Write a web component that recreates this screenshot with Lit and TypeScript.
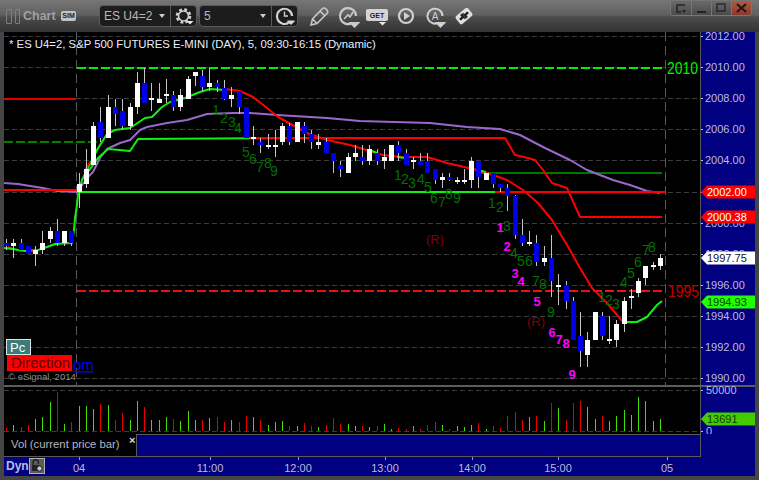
import { LitElement, html, svg, css } from "lit";
import { customElement } from "lit/decorators.js";

type Candle = [number, number, number, number, number]; // up, high, bodyTop, bodyBottom, low
const C: Candle[] = [
[0,239,243,246,250],[1,239,243,246,258],[0,239,243,250,250],[0,246,246,254,254],[1,246,250,254,266],[1,231,243,250,254],[1,227,231,239,243],[0,219,231,243,246],[1,231,231,243,246],[0,231,231,243,246],
[1,173,184,192,208],[1,149,169,184,188],[1,122,126,165,165],[0,107,122,138,142],[1,95,107,138,138],[0,99,107,114,126],[0,99,111,126,130],[1,103,107,126,130],[1,72,83,107,114],[0,68,83,103,103],
[1,83,98,100,111],[1,83,99,103,103],[1,79,94,96,103],[0,91,95,107,111],[1,89,95,107,111],[1,76,79,99,99],[1,72,72,76,86],[0,70,76,87,91],[1,68,83,87,91],[0,80,83,87,92],
[0,80,88,99,100],[1,87,95,99,107],[0,91,91,107,114],[0,107,107,138,138],[1,126,137,139,145],[0,138,142,145,153],[1,134,145,147,149],[1,130,145,147,157],[1,123,126,142,145],[0,123,126,142,145],
[1,122,122,142,142],[0,122,126,134,143],[0,130,134,142,149],[1,134,142,145,149],[0,138,142,153,153],[0,153,153,161,173],[0,161,165,169,177],[1,153,157,173,173],[1,145,153,157,161],[0,145,157,161,165],
[1,145,149,161,165],[0,149,153,161,165],[1,149,157,161,169],[1,145,145,161,161],[0,141,145,153,161],[0,149,153,165,165],[1,157,160,162,169],[0,153,161,165,165],[0,153,161,173,173],[0,169,169,180,184],
[1,173,177,180,188],[0,173,177,180,181],[1,177,180,182,184],[1,169,180,182,184],[1,157,161,180,188],[0,161,161,177,188],[1,173,173,180,180],[0,173,173,184,188],[0,184,184,188,192],[0,184,188,196,211],
[0,195,196,235,239],[0,219,235,243,246],[1,231,242,244,246],[0,235,243,262,266],[1,246,258,262,266],[0,235,258,281,297],[1,274,285,287,305],[0,281,285,301,309],[0,297,301,340,340],[0,312,336,351,367],
[1,332,340,355,367],[1,312,312,340,340],[0,312,316,336,340],[1,316,339,341,344],[1,320,324,340,347],[1,297,301,324,332],[1,289,296,298,309],[1,278,281,293,297],[1,266,266,278,285],[1,262,265,267,270],[1,254,258,266,270],
];
const VOL = [3,6,4,6,12,14,29,39,7,9,25,25,22,27,26,11,18,11,30,24,11,11,14,12,10,20,11,11,13,14,9,11,9,15,
14,11,6,9,10,5,5,8,5,4,6,13,7,7,5,5,4,5,7,2,3,2,5,2,6,9,6,2,5,4,6,8,2,
5,3,15,19,11,14,15,10,28,23,11,28,30,24,12,15,10,15,21,16,34,30,10,12];
const cx = (i: number) => Math.round(6 + i * 7.267);
const GRID = [36,67,98,129,160,192,223,254,285,316,347,378];
const pts = (a: number[][]) => a.map((p) => p.join(",")).join(" ");

const MA_GREEN = [[4,248],[13,249],[18,250],[25,251],[38,250],[47,247],[55,244],[72,243],[74,230],[75,218],[77,205],[78,195],[82,180],[88,168],[97,150],[107,134],[115,130],[130,128],[145,118],[152,117],[162,107],[170,102],[185,98],[200,92],[210,89],[225,90]];
const MA_RED = [[225,89],[240,91],[253,97],[267,108],[278,117],[307,133],[327,140],[350,145],[383,155],[403,157],[427,157],[447,163],[477,170],[493,175],[507,180],[523,190],[538,203],[552,220],[567,245],[580,268],[592,288],[607,303],[623,322]];
const MA_GREEN2 = [[623,322],[637,322],[647,317],[657,305],[662,301]];
const PURPLE = [[4,183],[18,184],[30,186],[43,188],[57,191],[77,192],[88,177],[93,172],[100,158],[107,149],[120,143],[130,140],[140,130],[147,127],[167,123],[187,120],[207,114],[233,113],[250,113],[277,115],[327,118],[360,121],[430,123],[467,127],[500,129],[520,135],[545,148],[570,160],[587,170],[613,180],[630,185],[647,191],[660,193]];
const STEP_GREEN = [[88,172],[98,158],[108,149],[130,151],[138,139],[320,138]];
const STEP_RED = [[250,138],[505,138],[515,155],[528,158],[535,160],[543,170],[552,183],[567,188],[580,217],[662,217]];

const GREENS: [string, number, number][] = [["1",216,110],["2",224,118],["3",232,122],["4",238,128],["5",246,152],["6",253,159],["7",260,167],["8",268,163],["9",274,171],
["1",398,175],["2",405,179],["3",412,183],["4",421,179],["5",428,187],["6",434,198],["7",442,202],["8",449,194],["9",457,198],
["1",492,203],["2",500,207],["3",507,226],["4",514,253],["5",521,261],["6",529,261],["7",536,281],["8",543,284],["9",551,312],
["1",602,297],["2",609,300],["3",616,304],["4",624,282],["5",631,273],["6",638,262],["7",646,250],["8",652,247]];
const MAGENTA: [string, number, number][] = [["1",500,227],["2",507,246],["3",515,273],["4",521,281],["5",537,301],["6",552,332],["7",559,339],["8",566,343],["9",572,374]];

const PRICES: [string, number][] = [["2012.00",36],["2010.00",67],["2008.00",98],["2006.00",129],["2004.00",160],["2002.00",192],["2000.00",223],["1998.00",254],["1996.00",285],["1994.00",316],["1992.00",347],["1990.00",378]];
const TAGS: [string, number, string, string][] = [["2002.00",192,"#ff0000","#ffffff"],["2000.38",217,"#ff0000","#ffffff"],["1997.75",258,"#ffffff","#101030"],["1994.93",302,"#22ff00","#064006"]];

const tag = (x: number, y: number, t: string, bg: string, fg: string) => svg`
  <polygon points="${x},${y} ${x + 6},${y - 6.5} 755,${y - 6.5} 755,${y + 6.5} ${x + 6},${y + 6.5}" fill=${bg}></polygon>
  <text class="tagt" x=${x + 6} y=${y + 4} fill=${fg}>${t}</text>`;

const caret = (x: number, y: number) => svg`<polygon points="${x},${y} ${x + 7},${y} ${x + 3.5},${y + 3.5}" fill="#e8e8e8"></polygon>`;

@customElement("app-root")
export class AppRoot extends LitElement {
  static styles = css`
    :host { display: block; width: 759px; height: 480px; overflow: hidden; font-family: "Liberation Sans", Arial, sans-serif; }
    .frame { width: 759px; height: 480px; box-sizing: border-box; padding-bottom: 4px; background: #454545; display: flex; flex-direction: column; }
    .toolbar { height: 32px; flex: none; display: flex; align-items: center; padding: 0 7px 0 6px; background: linear-gradient(#767676 0, #606060 15px, #4c4c4c 17px, #333 32px); }
    .bars { width: 14px; height: 15px; flex: none; display: flex; gap: 3px; }
    .bars i { flex: 1; border: 1px solid #808080; border-radius: 1px; }
    .title { width: 32px; margin-left: 3px; color: #a0a0a0; font-size: 12.5px; font-weight: 700; flex: none; }
    .sim { margin-left: 6px; width: 15px; height: 10px; background: #c4c4c4; border-radius: 2px; color: #222; font-size: 7px; font-weight: 700; text-align: center; line-height: 10px; flex: none; }
    .combo { box-sizing: border-box; width: 99px; height: 22px; background: #1c1c1c; border: 1px solid #5a5a5a; border-radius: 4px; display: flex; align-items: center; flex: none; color: #b8b8b8; font-size: 12px; }
    .combo.first { margin-left: 23px; width: 98px; }
    .combo.second { margin-left: 2px; margin-right: 4px; }
    .combo .val { flex: 1; padding-left: 4px; }
    .combo .arr { width: 0; height: 0; border: 3px solid transparent; border-top: 4px solid #ccc; margin: 3px 5px 0 0; }
    .combo svg { border-left: 1px solid #5a5a5a; flex: none; }
    .tool { flex: none; margin-left: 5px; display: block; }
    .win { margin-left: auto; align-self: flex-start; margin-top: 1px; display: flex; height: 14px; border: 1px solid #777; border-top: 0; border-radius: 0 0 4px 4px; overflow: hidden; }
    .win span { width: 20px; box-sizing: border-box; border-left: 1px solid #777; background: linear-gradient(#6a6a6a, #4a4a4a); display: flex; align-items: center; justify-content: center; }
    .win span:first-child { border-left: 0; }
    .win .close { background: linear-gradient(#b25a44, #8a3a2a); }
    .row { display: flex; margin-left: 4px; flex: none; width: 751px; }
    .plot { display: block; background: #000; flex: none; }
    .vline { width: 1px; background: #5a5a5a; flex: none; }
    .axisbox { display: block; width: 54px; background: #000080; flex: none; overflow: visible; }
    .sep { height: 2px; background: #5c5c5c; margin-left: 4px; width: 751px; flex: none; }
    .status { height: 23px; }
    .status-main { width: 696px; box-sizing: border-box; display: flex; border-bottom: 1px solid #5a5a5a; flex: none; }
    .legend { width: 132px; flex: none; background: #000; color: #b4b4c4; font-size: 11.3px; position: relative; padding: 4px 0 0 7px; box-sizing: border-box; }
    .legend b { position: absolute; left: 125px; top: 0; color: #ddd; font-size: 11px; line-height: 13px; }
    .strip { flex: 1; background: #000080; border-top: 1px solid #5a5a5a; border-left: 1px solid #5a5a5a; }
    .timerow { height: 19px; background: #000080; }
    .dyn { width: 25px; flex: none; color: #b8bce0; font-size: 12px; font-weight: 700; padding-left: 2px; box-sizing: border-box; line-height: 18px; }
    .lock { flex: none; display: block; margin-top: 1px; }
    text { font-family: "Liberation Sans", Arial, sans-serif; }
    .axis { font-size: 11px; fill: #bcbcdc; }
    .tagt { font-size: 11px; }
    .hd { font-size: 11.35px; fill: #e8f0ff; }
    .num { font-size: 14px; fill: #007000; text-anchor: middle; dominant-baseline: central; }
    .mag { font-size: 13px; font-weight: 700; fill: #ff00ff; text-anchor: middle; dominant-baseline: central; }
    .r { font-size: 13px; fill: #800000; text-anchor: middle; dominant-baseline: central; }
    .big { font-size: 16px; dominant-baseline: central; }
    .pc { font-size: 13px; fill: #fff; }
    .dir { font-size: 15px; fill: #5a0000; }
    .om { font-size: 15px; fill: #0000ff; text-decoration: underline; }
    .copy { font-size: 9.5px; fill: #8c8c8c; }
    .crisp { shape-rendering: crispEdges; }
    .get { font-size: 7px; font-weight: 700; fill: #222; text-anchor: middle; }
    .a { font-size: 10px; fill: #d0d0d0; text-anchor: middle; }
    polyline { fill: none; stroke-linejoin: round; }
  `;

  private plot() {
    return svg`
      ${GRID.map((y) => svg`<line class="crisp" x1="4" x2="700" y1=${y} y2=${y} stroke="#3c3c3c" stroke-dasharray="5 3"></line>`)}
      <line class="crisp" x1="76" x2="76" y1="32" y2="385" stroke="#5a5a5a" stroke-dasharray="9 5"></line>
      <line class="crisp" x1="665" x2="665" y1="32" y2="385" stroke="#5a5a5a" stroke-dasharray="9 5"></line>

      <line class="crisp" x1="4" x2="76" y1="98.5" y2="98.5" stroke="#e00000" stroke-width="2"></line>
      <line class="crisp" x1="4" x2="97" y1="142" y2="142" stroke="#008000" stroke-width="2" stroke-dasharray="9 3"></line>
      <line class="crisp" x1="77" x2="662" y1="67.5" y2="67.5" stroke="#00ee00" stroke-width="2" stroke-dasharray="9 3"></line>
      <line class="crisp" x1="77" x2="662" y1="290.5" y2="290.5" stroke="#f01010" stroke-width="2" stroke-dasharray="9 3"></line>
      <line class="crisp" x1="480" x2="662" y1="172.5" y2="172.5" stroke="#007800" stroke-width="2"></line>

      <polyline points=${pts(PURPLE)} stroke="#9a68cc" stroke-width="2"></polyline>
      <line class="crisp" x1="4" x2="77" y1="190" y2="190" stroke="#ff0000" stroke-width="2"></line>
      <line class="crisp" x1="77" x2="495" y1="192" y2="192" stroke="#10f010" stroke-width="2"></line>
      <line class="crisp" x1="495" x2="665" y1="192" y2="192" stroke="#ff0000" stroke-width="2"></line>
      <polyline points=${pts(STEP_GREEN)} stroke="#10f010" stroke-width="2"></polyline>
      <polyline points="8,247 13,249" stroke="#ff0000" stroke-width="2"></polyline>
      <polyline points=${pts(MA_GREEN)} stroke="#10f010" stroke-width="2"></polyline>
      <polyline points="30,251 38,252" stroke="#ff0000" stroke-width="2"></polyline>
      <polyline points="84,172 90,162" stroke="#ff0000" stroke-width="2"></polyline>
      <polyline points=${pts(STEP_RED)} stroke="#ff0000" stroke-width="2"></polyline>
      <polyline points=${pts(MA_RED)} stroke="#ff0000" stroke-width="2"></polyline>
      <polyline points="372,151 377,153" stroke="#10f010" stroke-width="2"></polyline>
      <polyline points="397,157 405,158" stroke="#10f010" stroke-width="2"></polyline>
      <polyline points="477,170 486,172" stroke="#10f010" stroke-width="2"></polyline>
      <polyline points=${pts(MA_GREEN2)} stroke="#10f010" stroke-width="2"></polyline>

      ${C.map((c, i) => {
        const x = cx(i);
        return svg`
          <rect class="crisp" x=${x} y=${c[1]} width="1" height=${c[4] - c[1]} fill="#c4c4c4"></rect>
          <rect class="crisp" x=${x - 2} y=${c[2]} width="5" height=${c[3] - c[2]} fill=${c[0] ? "#ffffff" : "#0000e8"}></rect>`;
      })}

      ${GREENS.map((g) => svg`<text class="num" x=${g[1]} y=${g[2]}>${g[0]}</text>`)}
      ${MAGENTA.map((g) => svg`<text class="mag" x=${g[1]} y=${g[2]}>${g[0]}</text>`)}
      <text class="r" x="435" y="239">(R)</text>
      <text class="r" x="536" y="321">(R)</text>

      <text class="hd" x="9" y="48">* ES U4=2, S&amp;P 500 FUTURES E-MINI (DAY), 5, 09:30-16:15 (Dynamic)</text>
      <text class="big" x="667" y="68" fill="#00f000" textLength="31" lengthAdjust="spacingAndGlyphs">2010</text>
      <text class="big" x="668" y="291" fill="#c00000" textLength="31" lengthAdjust="spacingAndGlyphs">1995</text>

      <rect class="crisp" x="6.5" y="339.5" width="24" height="15" fill="#3a7c7c" stroke="#d8e8e8"></rect>
      <text class="pc" x="10" y="352">Pc</text>
      <rect class="crisp" x="7" y="355" width="65" height="16" fill="#ff0000"></rect>
      <text class="dir" x="11" y="368">Direction</text>
      <text class="om" x="73" y="370">om</text>
      <text class="copy" x="8" y="380">© eSignal, 2014</text>
    `;
  }

  private axis() {
    return svg`
      ${PRICES.map((p) => svg`
        <line class="crisp" x1="701" x2="703" y1=${p[1]} y2=${p[1]} stroke="#bcbcdc"></line>
        <text class="axis" x="705" y=${p[1] + 4}>${p[0]}</text>`)}
      ${TAGS.map((t) => tag(701, t[1], t[0], t[2], t[3]))}
    `;
  }

  private volume() {
    return svg`
      <line class="crisp" x1="4" x2="700" y1="390" y2="390" stroke="#3c3c3c" stroke-dasharray="5 3"></line>
      <line class="crisp" x1="4" x2="700" y1="431" y2="431" stroke="#3c3c3c" stroke-dasharray="5 3"></line>
      ${VOL.map((h, i) => svg`<rect class="crisp" x=${cx(i)} y=${431 - h} width="1" height=${h} fill=${C[i][0] ? "#44dd00" : "#e80000"}></rect>`)}
    `;
  }

  private tools() {
    const s = "#c8c8c8";
    return html`
      <svg class="tool" width="24" height="24" viewBox="-12 -12 24 24" fill="none" stroke=${s} stroke-width="1.6">
        <path d="M-8 9 L-6.5 3 L3 -7 Q5 -9 7 -7 L8 -6 Q9.5 -4 8 -2.5 L-2 7.5 Z M-6.5 3 L-2 7.5 M1 -5 L6 0"></path>
      </svg>
      <svg class="tool" width="24" height="24" viewBox="-12 -12 24 24" fill="none" stroke=${s} stroke-width="2.2">
        <path d="M4 7 A8 8 0 1 1 8 0"></path>
        <path d="M-4 3 L0 -1 L2 1 L5 -4" stroke-width="1.6"></path>
        ${caret(3, 7)}
      </svg>
      <svg class="tool" width="24" height="24" viewBox="-12 -12 24 24">
        <rect x="-11" y="-7" width="22" height="12" rx="2" fill="#d4d4d4"></rect>
        <text class="get" x="0" y="2">GET</text>
        ${caret(2, 6)}
      </svg>
      <svg class="tool" width="24" height="24" viewBox="-12 -12 24 24" fill="none" stroke="#d0d0d0" stroke-width="2.2">
        <circle r="7"></circle>
        <polygon points="-2,-4 -2,4 4,0" fill="#d0d0d0" stroke="none"></polygon>
      </svg>
      <svg class="tool" width="24" height="24" viewBox="-12 -12 24 24" fill="none" stroke="#d0d0d0" stroke-width="2">
        <path d="M4 6.5 A7.5 7.5 0 1 1 7.5 0"></path>
        <text class="a" x="0" y="3.5" stroke="none">A</text>
        ${caret(2, 7)}
      </svg>
      <svg class="tool" width="24" height="24" viewBox="-12 -12 24 24">
        <rect x="-8" y="-5" width="16" height="10" rx="2" fill="#e0e0e0" transform="rotate(-40)"></rect>
        <path d="M-1 -3 L-4 -1 L-2.5 0.5 L-5 3 L-3 4.5 L-0.5 2 L1 3.5 Z M1 3 L4 1 L2.5 -0.5 L5 -3 L3 -4.5 L0.5 -2 L-1 -3.5 Z" fill="#222"></path>
      </svg>
    `;
  }

  render() {
    return html`
      <div class="frame">
        <div class="toolbar">
          <div class="bars"><i></i><i></i></div>
          <div class="title">Chart</div>
          <div class="sim">SIM</div>
          <div class="combo first">
            <span class="val">ES U4=2</span><span class="arr"></span>
            <svg width="25" height="20" viewBox="-12.5 -10 25 20" fill="none">
              <circle r="6.5" stroke="#d0d0d0" stroke-width="2.6" stroke-dasharray="2.8 2.3"></circle>
              <circle r="5" stroke="#d0d0d0" stroke-width="1.6"></circle>
              ${caret(3, 5)}
            </svg>
          </div>
          <div class="combo second">
            <span class="val">5</span><span class="arr"></span>
            <svg width="25" height="20" viewBox="-12.5 -10 25 20" fill="none" stroke="#d0d0d0">
              <path d="M4.5 6.5 A7.6 7.6 0 1 1 7.6 0" stroke-width="2.2"></path>
              <path d="M0 -4.5 V0 H3.5" stroke-width="1.4"></path>
              ${caret(3, 5)}
            </svg>
          </div>
          ${this.tools()}
          <div class="win">
            <span><svg width="12" height="11" viewBox="0 0 12 11" fill="none" stroke="#222" stroke-width="1.4"><path d="M10 2 H2 V9 H6"></path><path d="M7 7 h4 l-2 3z" fill="#222" stroke="none"></path></svg></span>
            <span><svg width="10" height="11" viewBox="0 0 10 11"><rect x="0" y="8" width="9" height="2" fill="#222"></rect></svg></span>
            <span><svg width="11" height="10" viewBox="0 0 11 10" fill="none" stroke="#222" stroke-width="1.3"><rect x="1" y="1" width="8" height="7"></rect></svg></span>
            <span class="close"><svg width="11" height="10" viewBox="0 0 11 10" fill="none" stroke="#2a1410" stroke-width="2.2"><path d="M1 1 L10 9 M10 1 L1 9"></path></svg></span>
          </div>
        </div>

        <div class="row">
          <svg class="plot" width="696" height="353" viewBox="4 32 696 353">${this.plot()}</svg>
          <div class="vline"></div>
          <svg class="axisbox" width="54" height="353" viewBox="701 32 54 353">${this.axis()}</svg>
        </div>
        <div class="sep"></div>
        <div class="row">
          <svg class="plot" width="696" height="47" viewBox="4 387 696 47">${this.volume()}</svg>
          <div class="vline"></div>
          <svg class="axisbox" width="54" height="47" viewBox="701 387 54 47">
            <line class="crisp" x1="701" x2="703" y1="390" y2="390" stroke="#bcbcdc"></line>
            <text class="axis" x="706" y="394">50000</text>
            <line class="crisp" x1="701" x2="703" y1="431" y2="431" stroke="#bcbcdc"></line>
            <text class="axis" x="706" y="435">0</text>
            ${tag(701, 419, "13691", "#44cc00", "#0c400c")}
          </svg>
        </div>
        <div class="row status">
          <div class="status-main">
            <div class="legend">Vol (current price bar)<b>×</b></div>
            <div class="strip"></div>
          </div>
          <div class="vline"></div>
          <div class="axisbox"></div>
        </div>
        <div class="row timerow">
          <div class="dyn">Dyn</div>
          <svg class="lock" width="16" height="16" viewBox="0 0 16 16">
            <rect x="0.5" y="0.5" width="15" height="15" fill="#5c5c5c" stroke="#b0b0b0"></rect>
            <path d="M4 7 V4.5 A2.7 2.7 0 0 1 9.4 4.5 V6" fill="none" stroke="#222" stroke-width="1.4"></path>
            <rect x="3" y="7" width="8" height="6" rx="1" fill="#222"></rect>
            <circle cx="10.5" cy="10.5" r="2.6" fill="#c8c8c8" stroke="#222"></circle>
          </svg>
          <svg width="710" height="19" viewBox="45 457 710 19">
            ${([["04",79],["11:00",210],["12:00",298],["13:00",385],["14:00",472],["15:00",558],["05",667]] as [string, number][]).map(
              (t) => svg`
                <line class="crisp" x1=${t[1]} x2=${t[1]} y1="457" y2="460" stroke="#9a9ac0"></line>
                <text class="axis" x=${t[1]} y="472" text-anchor="middle">${t[0]}</text>`
            )}
          </svg>
        </div>
      </div>
    `;
  }
}
